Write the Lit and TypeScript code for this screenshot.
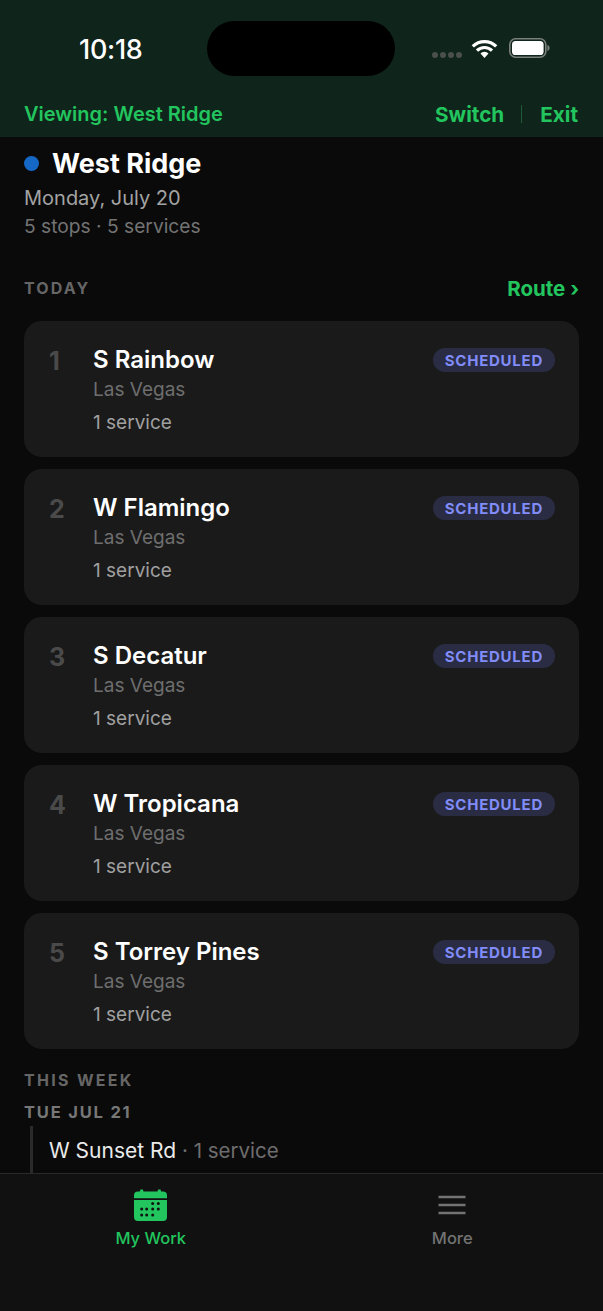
import { LitElement, html, css } from "lit";
import { customElement } from "lit/decorators.js";

const stops = ["S Rainbow", "W Flamingo", "S Decatur", "W Tropicana", "S Torrey Pines"];

@customElement("app-root")
export class AppRoot extends LitElement {
  static styles = css`
    :host { display: flex; flex-direction: column; width: 603px; height: 1311px; background: #0a0a0a; font-family: Inter, "Liberation Sans", sans-serif; overflow: hidden; }
    .top { height: 137px; flex: none; background: #0f241a; box-sizing: border-box; padding: 21px 25px 0 24px; display: flex; flex-direction: column; }
    .status { height: 55px; display: flex; align-items: flex-start; }
    .time { width: 183px; padding: 1px 0 0 55px; box-sizing: border-box; color: #fff; font-size: 27px; font-weight: 500; line-height: 55px; letter-spacing: -0.3px; }
    .island { width: 188px; height: 55px; background: #000; border-radius: 28px; flex: none; }
    .sys { display: flex; align-items: center; margin-left: 37px; height: 55px; }
    .dots { display: flex; gap: 2px; margin-top: 12px; margin-right: 9px; }
    .dots i { width: 6px; height: 6px; border-radius: 50%; background: #4a4f4c; display: block; }
    .wifi { display: block; margin-right: 11px; margin-top: -1px; }
    .battery { display: block; margin-top: -1px; }
    .banner { display: flex; align-items: center; margin-top: 25px; height: 26px; color: #22c55e; font-size: 20px; font-weight: 600; }
    .banner .view { flex: 1; }
    .banner .act { font-weight: 700; font-size: 20.7px; }
    .sep { width: 1px; height: 18px; background: #1f5a38; margin: 0 18px 0 17px; }
    main { flex: 1; min-height: 0; overflow: hidden; padding: 13px 24px 0; box-sizing: border-box; }
    .title { display: flex; align-items: center; height: 28px; }
    .dot { width: 15px; height: 15px; border-radius: 50%; background: #1668c7; margin: -2px 13px 0 0; }
    h1 { margin: 0; color: #fff; font-size: 27px; font-weight: 700; line-height: 28px; }
    .date { color: #a3a3a3; font-size: 20px; line-height: 28px; margin-top: 6px; }
    .sum { color: #737373; font-size: 19.2px; line-height: 28px; }
    .sec { display: flex; justify-content: space-between; align-items: center; margin-top: 34px; height: 28px; }
    .label { color: #666; font-size: 16px; font-weight: 700; letter-spacing: 2.1px; line-height: 20px; }
    .route { color: #22c55e; font-size: 20.5px; font-weight: 700; }
    .cards { display: flex; flex-direction: column; gap: 12px; margin-top: 19px; }
    .card { height: 136px; box-sizing: border-box; background: #1a1a1a; border-radius: 18px; padding: 24px 24px 0 25px; display: flex; }
    .num { width: 44px; flex: none; color: #4a4a4a; font-size: 25px; font-weight: 700; line-height: 32px; }
    .body { flex: 1; }
    .name { color: #fff; font-size: 24px; font-weight: 600; line-height: 30px; }
    .city { color: #6e6e6e; font-size: 19px; line-height: 26px; margin-top: 2px; }
    .svc { color: #a0a0a0; font-size: 19px; line-height: 26px; margin-top: 7px; }
    .badge { align-self: flex-start; margin-top: 3px; height: 24px; padding: 0 12px; border-radius: 12px; background: #2a2c44; color: #818cf8; font-size: 15px; font-weight: 700; letter-spacing: 0.75px; line-height: 25px; }
    .week { margin-top: 21px; letter-spacing: 2.3px; }
    .day { color: #777; font-size: 16.5px; font-weight: 700; letter-spacing: 1.8px; line-height: 20px; margin-top: 12px; }
    .row { margin: 4px 0 0 6px; border-left: 3px solid #2a2a2a; padding: 11px 0 0 16px; height: 44px; font-size: 21px; line-height: 28px; color: #eaeaea; }
    .row span { color: #6e6e6e; font-size: 20.5px; }
    nav { height: 138px; flex: none; box-sizing: border-box; background: #111; border-top: 1px solid #2a2a2a; display: flex; }
    .tab { flex: 1; display: flex; flex-direction: column; align-items: center; padding-top: 15px; color: #737373; font-size: 16.5px; font-weight: 500; line-height: 20px; }
    .tab.on { color: #22c55e; }
    .tab svg { display: block; margin-bottom: 7px; }
  `;

  render() {
    return html`
      <div class="top">
        <div class="status">
          <div class="time">10:18</div>
          <div class="island"></div>
          <div class="sys">
            <div class="dots"><i></i><i></i><i></i><i></i></div>
            <svg class="wifi" width="27" height="19" viewBox="0 0 27 19">
              <path d="M13.5 19l-4-4.600a5.400 5.400 0 0 1 8 0z" fill="#fff"/>
              <path d="M1.800 7.400a16.600 16.600 0 0 1 23.400 0M6 11.600a10.600 10.600 0 0 1 15 0" fill="none" stroke="#fff" stroke-width="3.200"/>
            </svg>
            <svg class="battery" width="41" height="20" viewBox="0 0 41 20">
              <rect x="0.800" y="0.800" width="36" height="18.400" rx="5.800" fill="none" stroke="#7a7f7c" stroke-width="1.600"/>
              <rect x="3" y="3" width="31.600" height="14" rx="3.600" fill="#fff"/>
              <path d="M38.400 7v6c1.400-.4 2.200-1.600 2.200-3s-.8-2.600-2.200-3z" fill="#7a7f7c"/>
            </svg>
          </div>
        </div>
        <div class="banner">
          <div class="view">Viewing: West Ridge</div>
          <div class="act">Switch</div>
          <div class="sep"></div>
          <div class="act">Exit</div>
        </div>
      </div>
      <main>
        <div class="title"><div class="dot"></div><h1>West Ridge</h1></div>
        <div class="date">Monday, July 20</div>
        <div class="sum">5 stops · 5 services</div>
        <div class="sec"><div class="label">TODAY</div><div class="route">Route ›</div></div>
        <div class="cards">
          ${stops.map((s, i) => html`
            <div class="card">
              <div class="num">${i + 1}</div>
              <div class="body">
                <div class="name">${s}</div>
                <div class="city">Las Vegas</div>
                <div class="svc">1 service</div>
              </div>
              <div class="badge">SCHEDULED</div>
            </div>`)}
        </div>
        <div class="label week">THIS WEEK</div>
        <div class="day">TUE JUL 21</div>
        <div class="row">W Sunset Rd <span>· 1 service</span></div>
      </main>
      <nav>
        <div class="tab on">
          <svg width="33" height="32" viewBox="0 0 33 32">
            <path d="M6.500 0.500h2.400l.6 2h14l.6-2h2.400l.6 2h1.900a4 4 0 0 1 4 4v2.700H0V6.500a4 4 0 0 1 4-4h1.900z" fill="#22c55e"/>
            <path d="M0 11h33v17a4 4 0 0 1-4 4H4a4 4 0 0 1-4-4z" fill="#22c55e"/>
            <g fill="#111">
              <circle cx="18.700" cy="14.500" r="1.500"/><circle cx="24.300" cy="14.500" r="1.500"/>
              <circle cx="7.700" cy="20" r="1.500"/><circle cx="12.700" cy="20" r="1.500"/><circle cx="18.700" cy="20" r="1.500"/><circle cx="24.300" cy="20" r="1.500"/>
              <circle cx="7.700" cy="26" r="1.500"/><circle cx="12.700" cy="26" r="1.500"/><circle cx="18.700" cy="26" r="1.500"/>
            </g>
          </svg>
          My Work
        </div>
        <div class="tab">
          <svg width="32" height="32" viewBox="0 0 32 32">
            <path d="M2.500 8h27M2.500 16h27M2.500 24h27" stroke="#737373" stroke-width="2.400" fill="none"/>
          </svg>
          More
        </div>
      </nav>
    `;
  }
}
